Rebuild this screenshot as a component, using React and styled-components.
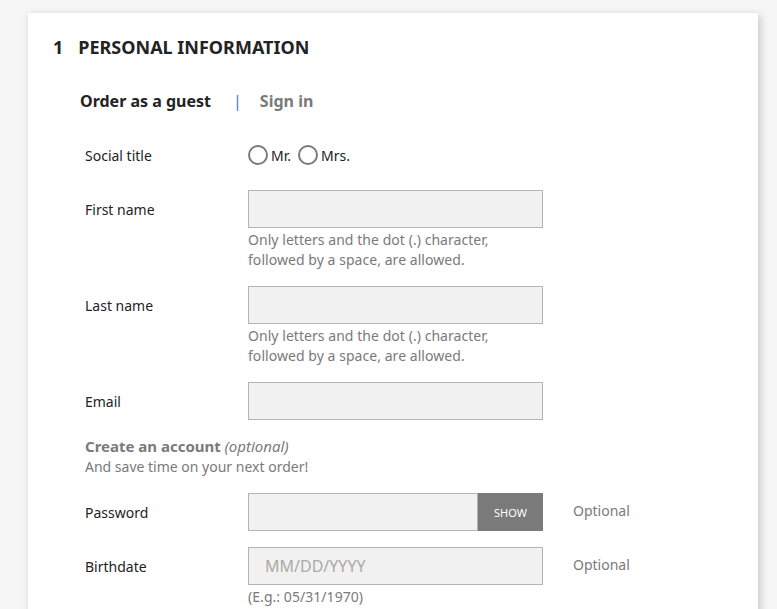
import React from 'react';
import styled, { createGlobalStyle } from 'styled-components';

const GlobalStyle = createGlobalStyle`
    body {
        margin: 0;
        background: #f6f6f6;
        font-family: "Noto Sans", "Open Sans", sans-serif;
        color: #232323;
    }
`;

const Page = styled.div`
    padding: 13px 19px 0 28px;
    height: 609px;
    overflow: hidden;
    box-sizing: border-box;
`;

const Card = styled.section`
    background: #fff;
    box-shadow: 2px 2px 8px 0 rgba(0, 0, 0, 0.2);
    padding: 22px 25px 40px;
    min-height: 620px;
    box-sizing: border-box;
`;

const StepTitle = styled.h1`
    margin: 0;
    font-size: 18px;
    line-height: 25px;
    font-weight: 700;
    text-transform: uppercase;
    color: #232323;

    .num {
        display: inline-block;
        margin-right: 15px;
    }
`;

const Tabs = styled.nav`
    display: flex;
    align-items: center;
    margin: 29px 0 0 27px;
    height: 24px;
`;

const Tab = styled.span`
    font-size: 16px;
    font-weight: 700;
    line-height: 24px;
    color: ${props => props.active ? '#232323' : '#7a7a7a'};
`;

const Separator = styled.span`
    margin: 0 18px 0 22px;
    font-size: 16px;
    color: #3d7cc9;
`;

const Form = styled.div`
    margin: 23px 0 0 32px;
    display: flex;
    flex-direction: column;
    gap: 16px;
`;

const Row = styled.div`
    display: grid;
    grid-template-columns: 133px 295px auto;
    column-gap: 30px;
    align-items: start;
`;

const Label = styled.label`
    font-size: 14px;
    line-height: 20px;
    height: 38px;
    box-sizing: border-box;
    padding-top: 2px;
    display: flex;
    align-items: center;
    color: #232323;
`;

const Field = styled.div`
    display: flex;
    flex-direction: column;
`;

const Radios = styled.div`
    display: flex;
    align-items: center;
    height: 38px;
    font-size: 14px;
`;

const Radio = styled.span`
    display: inline-flex;
    align-items: center;
    margin-right: 7px;

    &::before {
        content: '';
        width: 16px;
        height: 16px;
        border: 2px solid #7a7a7a;
        border-radius: 50%;
        margin-right: 3px;
    }
`;

const Input = styled.div`
    height: 38px;
    box-sizing: border-box;
    border: 1px solid rgba(0, 0, 0, 0.25);
    background: #f1f1f1;
    padding: 0 16px;
    display: flex;
    align-items: center;
    flex: 1 1 auto;
    font-size: 16px;
    color: #acaaa6;
`;

const InputGroup = styled.div`
    display: flex;
`;

const ShowButton = styled.button`
    width: 65px;
    height: 38px;
    border: none;
    background: #7a7a7a;
    color: #fff;
    font-family: "Noto Sans", sans-serif;
    font-size: 11px;
    text-transform: uppercase;
    padding: 0;
`;

const Help = styled.div`
    margin-top: 2px;
    font-size: 14px;
    line-height: 20px;
    letter-spacing: 0.05px;
    color: #7a7a7a;
`;

const Aside = styled.div`
    font-size: 14px;
    line-height: 20px;
    color: #7a7a7a;
    height: 36px;
    display: flex;
    align-items: center;
`;

const AccountNote = styled.div`
    font-size: 14px;
    line-height: 20px;
    color: #7a7a7a;

    b {
        font-size: 15px;
        font-weight: 700;
    }

    i {
        font-size: 15px;
        font-weight: 400;
    }
`;

const nameHelp = (
    <Help>
        Only letters and the dot (.) character,<br />
        followed by a space, are allowed.
    </Help>
);

export default function App() {
    return (
        <Page>
            <GlobalStyle />
            <Card>
                <StepTitle><span className="num">1</span>Personal Information</StepTitle>
                <Tabs>
                    <Tab active>Order as a guest</Tab>
                    <Separator>|</Separator>
                    <Tab>Sign in</Tab>
                </Tabs>
                <Form>
                    <Row>
                        <Label>Social title</Label>
                        <Radios>
                            <Radio>Mr.</Radio>
                            <Radio>Mrs.</Radio>
                        </Radios>
                    </Row>
                    <Row>
                        <Label>First name</Label>
                        <Field>
                            <Input />
                            {nameHelp}
                        </Field>
                    </Row>
                    <Row>
                        <Label>Last name</Label>
                        <Field>
                            <Input />
                            {nameHelp}
                        </Field>
                    </Row>
                    <Row>
                        <Label>Email</Label>
                        <Field>
                            <Input />
                        </Field>
                    </Row>
                    <AccountNote>
                        <b>Create an account</b> <i>(optional)</i><br />
                        And save time on your next order!
                    </AccountNote>
                    <Row>
                        <Label>Password</Label>
                        <InputGroup>
                            <Input />
                            <ShowButton>Show</ShowButton>
                        </InputGroup>
                        <Aside>Optional</Aside>
                    </Row>
                    <Row>
                        <Label>Birthdate</Label>
                        <Field>
                            <Input>MM/DD/YYYY</Input>
                            <Help>(E.g.: 05/31/1970)</Help>
                        </Field>
                        <Aside>Optional</Aside>
                    </Row>
                </Form>
            </Card>
        </Page>
    );
}
